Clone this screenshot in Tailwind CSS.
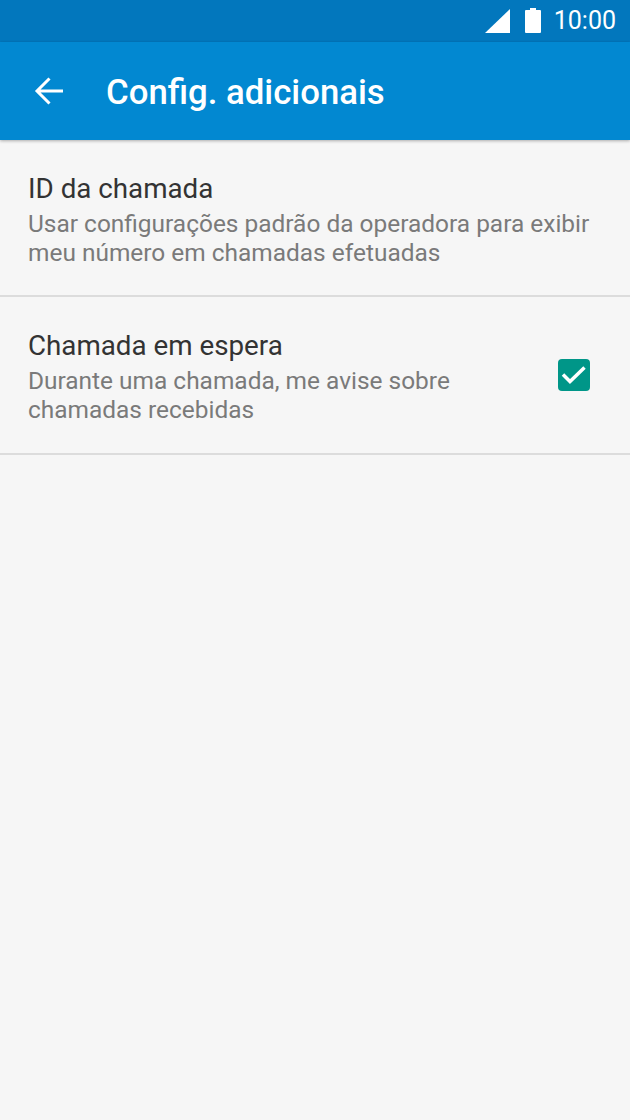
<!DOCTYPE html>
<html lang="pt">
<head>
    <meta charset="UTF-8">
    <meta name="viewport" content="width=device-width, initial-scale=1.0">
    <title>Config. adicionais</title>
    <script src="https://cdn.jsdelivr.net/npm/@tailwindcss/browser@4"></script>
</head>
<body class="bg-[#f6f6f6] font-[Roboto,sans-serif]">
    <div class="w-[630px] h-[1120px] overflow-hidden flex flex-col">
        <!-- status bar -->
        <div class="h-[42px] bg-[#0277bd] flex items-center justify-end text-white shrink-0">
            <svg class="w-[26px] h-[26px] mr-[13px] mb-[1px]" viewBox="0 0 26 26"><path d="M25 1V25H0z" fill="#fff"/></svg>
            <svg class="w-[18px] h-[26px] mr-[12px] mb-[1px]" viewBox="0 0 18 26"><path d="M6 0h6v2h4a1 1 0 0 1 1 1v21a1 1 0 0 1-1 1H2a1 1 0 0 1-1-1V3a1 1 0 0 1 1-1h4z" fill="#fff"/></svg>
            <span class="text-[25px] leading-[42px] mr-[14px] mb-[1px]">10:00</span>
        </div>
        <!-- toolbar -->
        <div class="h-[98px] bg-[#0288d1] flex items-center shrink-0 shadow-[0_1px_3px_rgba(0,0,0,0.3)] z-10">
            <svg class="w-[30px] h-[30px] ml-[34px]" viewBox="0 0 30 30" fill="none" stroke="#fff" stroke-width="3"><path d="M29 15H3M15.500 2.500L3 15l12.500 12.500"/></svg>
            <h1 class="ml-[42px] text-[34.750px] leading-[40px] font-medium text-white mt-[2px]">Config. adicionais</h1>
        </div>
        <!-- settings list -->
        <div class="h-[157px] px-[28px] pt-[32px] border-b-2 border-[#dcdcdc] shrink-0">
            <div class="text-[27.750px] leading-[34px] text-[#333333]">ID da chamada</div>
            <div class="text-[24.450px] leading-[29px] text-[#7a7a7a] mt-[3px]">Usar configurações padrão da operadora para exibir<br>meu número em chamadas efetuadas</div>
        </div>
        <div class="h-[158px] pl-[28px] pr-[40px] pt-[32px] border-b-2 border-[#dcdcdc] flex justify-between shrink-0">
            <div>
                <div class="text-[27.750px] leading-[34px] text-[#333333]">Chamada em espera</div>
                <div class="text-[24.450px] leading-[29px] text-[#7a7a7a] mt-[3px]">Durante uma chamada, me avise sobre<br>chamadas recebidas</div>
            </div>
            <div class="w-[32px] h-[32px] mt-[30px] bg-[#009688] rounded-[4px] flex items-center justify-center">
                <svg class="w-[32px] h-[32px]" viewBox="0 0 32 32" fill="none" stroke="#fff" stroke-width="3.500"><path d="M5 15.500l7 7L26.500 8.500"/></svg>
            </div>
        </div>
    </div>
</body>
</html>
